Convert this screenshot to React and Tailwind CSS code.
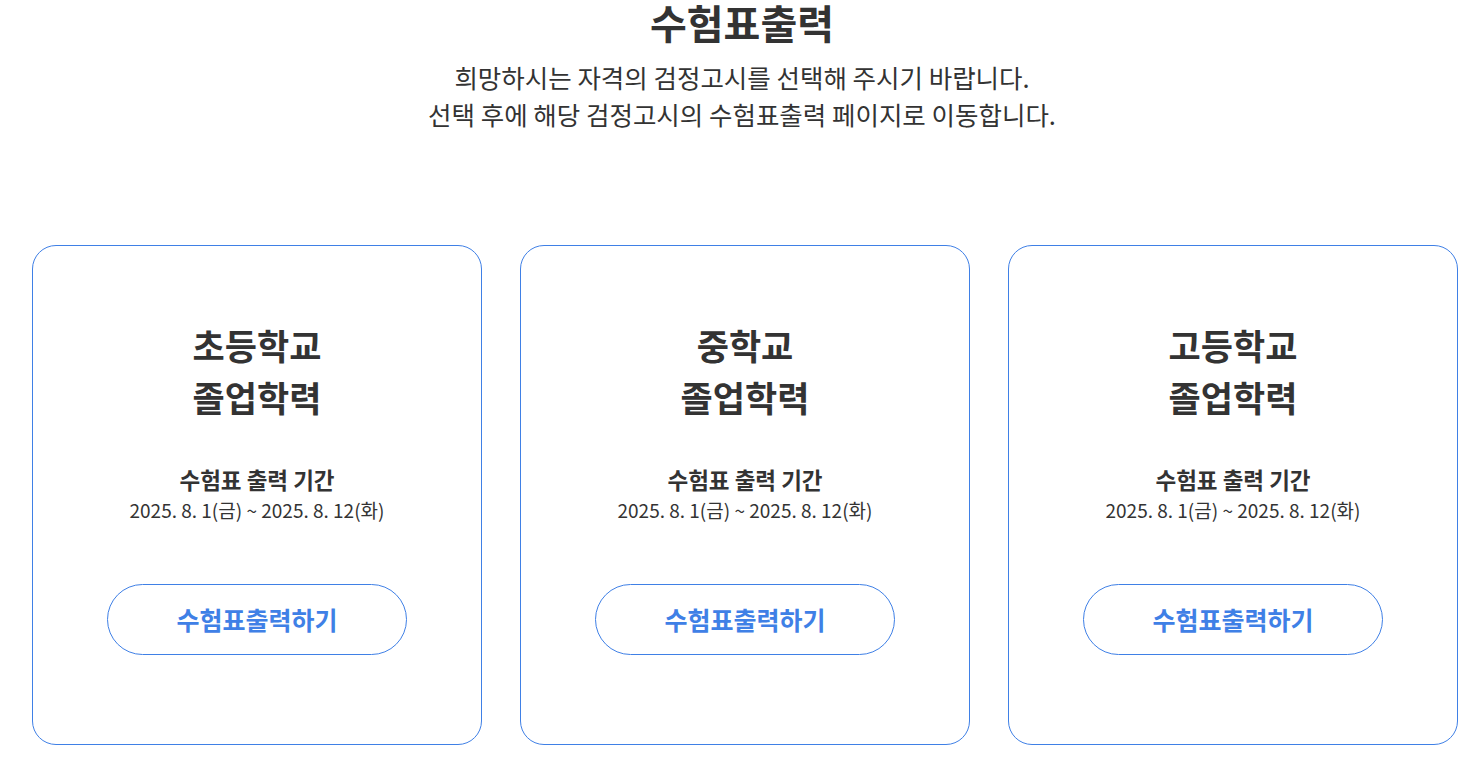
const cards = [
  { title: ['초등학교', '졸업학력'] },
  { title: ['중학교', '졸업학력'] },
  { title: ['고등학교', '졸업학력'] },
];

function Card({ title }) {
  return (
    <div className="flex h-[500px] w-[450px] flex-col items-center rounded-[24px] border border-[#3f80e6] bg-white pt-[73px]">
      <h3 className="text-center text-[35px] font-bold leading-[52px] text-[#333]">
        {title[0]}
        <br />
        {title[1]}
      </h3>
      <p className="mt-[41px] text-[22.5px] font-bold leading-[30px] text-[#333]">수험표 출력 기간</p>
      <p className="mt-[2px] text-[19px] leading-[28px] text-[#333]">2025. 8. 1(금) ~ 2025. 8. 12(화)</p>
      <button className="mt-[60px] h-[71px] w-[300px] rounded-full border border-[#3f80e6] bg-white text-[25px] font-bold text-[#3f80e6]">
        수험표출력하기
      </button>
    </div>
  );
}

export default function App() {
  return (
    <div
      className="min-h-[757px] bg-white"
      style={{ fontFamily: '"Noto Sans CJK KR", "Noto Sans", sans-serif' }}
    >
      <div className="text-center">
        <h2 className="text-[40px] font-bold leading-[44px] text-[#333]">수험표출력</h2>
        <p className="mt-[14px] text-[25.5px] leading-[37px] text-[#333]">
          희망하시는 자격의 검정고시를 선택해 주시기 바랍니다.
          <br />
          선택 후에 해당 검정고시의 수험표출력 페이지로 이동합니다.
        </p>
      </div>
      <div className="ml-[32px] mt-[113px] flex gap-[38px]">
        {cards.map((c) => (
          <Card key={c.title[0]} title={c.title} />
        ))}
      </div>
    </div>
  );
}
